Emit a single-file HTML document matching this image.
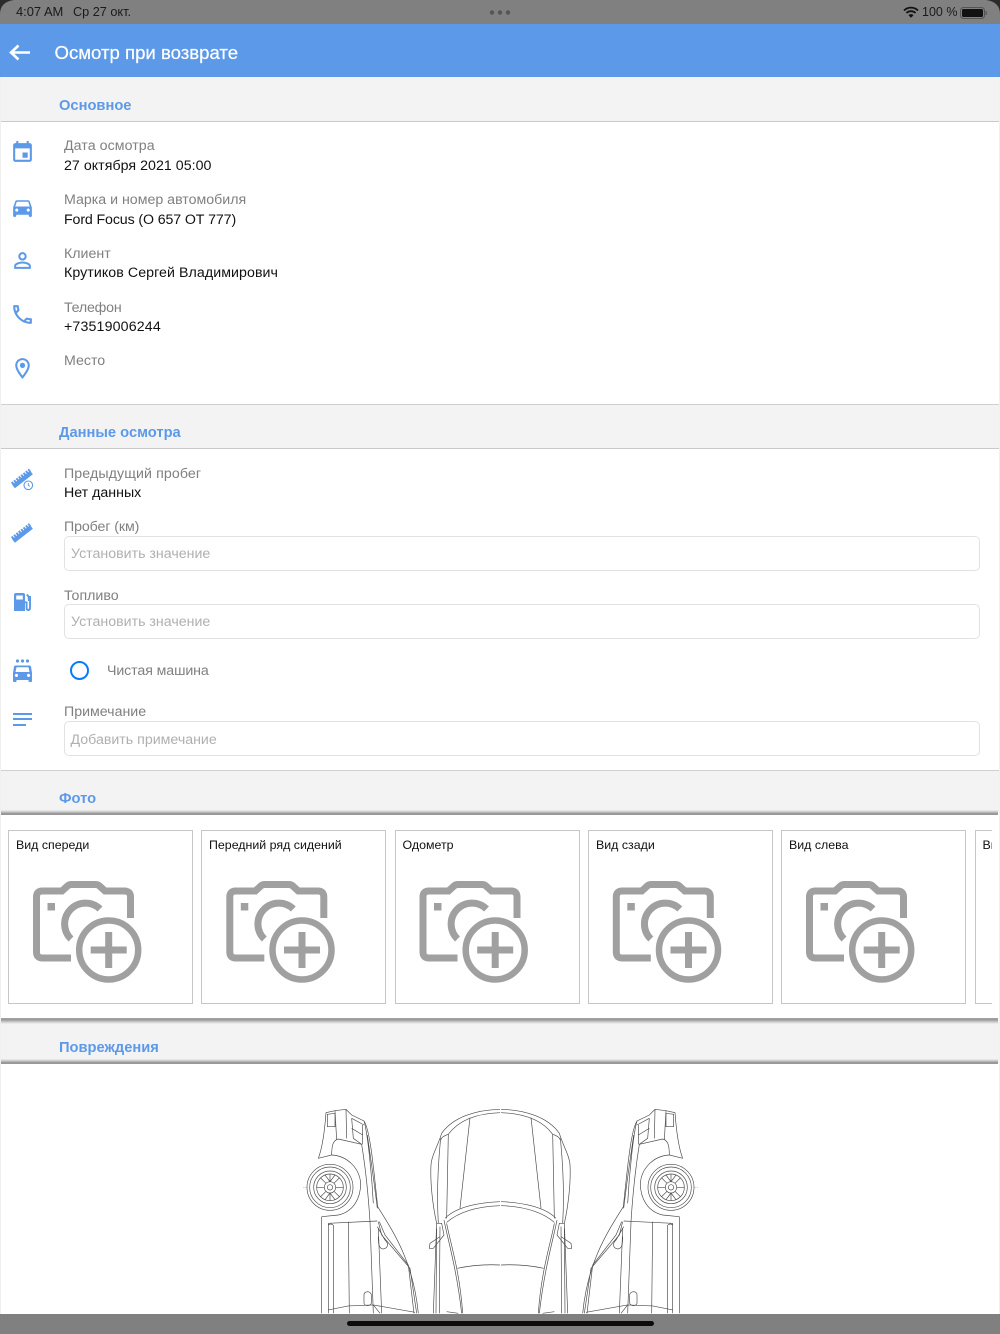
<!DOCTYPE html>
<html lang="ru">
<head>
<meta charset="utf-8">
<title>Осмотр при возврате</title>
<style>
html,body{margin:0;padding:0;background:#fff}
#p{position:relative;width:1000px;height:1334px;overflow:hidden;background:#fff;font-family:"Liberation Sans","Noto Sans CJK JP",sans-serif}
#p div,#p svg{position:absolute}
.t{white-space:nowrap;line-height:18px;font-size:14.2px}
.l{color:#808080}
.v{color:#111}
.h{left:59px;color:#5c99e8;font-size:14.7px;font-weight:bold;white-space:nowrap;line-height:18px}
.g{left:0;width:1000px;background:#f3f3f3}
.i{left:64px;width:914px;height:32px;border:1px solid #e2e2e2;border-radius:5px;background:#fff}
.ph{left:71px;color:#b0b0b0;font-size:14.2px;line-height:18px;white-space:nowrap}
.c{top:830px;width:183px;height:172px;border:1px solid #c6c6c6;background:#fff;overflow:hidden}
.c div{left:7px;top:6px;font-size:12.4px;line-height:16px;color:#111;white-space:nowrap}
.sh{left:1px;width:997px;height:5px;background:linear-gradient(#f0f0f0,#c4c4c4 40%,#8c8c8c 80%,#a4a4a4)}
</style>
</head>
<body>
<div id="p">

<div class="g" style="top:77px;height:45px"></div>
<div style="left:0;top:121px;width:1000px;height:1px;background:#c9c9c9"></div>
<div class="h" style="top:96.5px">Основное</div>

<div class="g" style="top:404px;height:45px"></div>
<div style="left:0;top:404px;width:1000px;height:1px;background:#cfcfcf"></div>
<div style="left:0;top:448px;width:1000px;height:1px;background:#c9c9c9"></div>
<div class="h" style="top:424px">Данные осмотра</div>

<div class="g" style="top:770px;height:43px"></div>
<div style="left:0;top:770px;width:1000px;height:1px;background:#cfcfcf"></div>
<div class="sh" style="top:810px"></div>
<div class="h" style="top:790px">Фото</div>

<div class="g" style="top:1020px;height:43px"></div>
<div class="sh" style="top:1018px;height:6px;background:linear-gradient(#a4a4a4,#9a9a9a 30%,#cacaca 65%,#f3f3f3)"></div>
<div class="sh" style="top:1059px"></div>
<div class="h" style="top:1039px">Повреждения</div>

<div style="left:0;top:77px;width:1px;height:1240px;background:#f0f0f0"></div>
<div style="left:999px;top:77px;width:1px;height:1240px;background:#f0f0f0"></div>

<div class="t l" style="left:64px;top:137px;letter-spacing:.06px">Дата осмотра</div>
<div class="t v" style="left:64px;top:157px;letter-spacing:.04px">27 октября 2021 05:00</div>
<div class="t l" style="left:64px;top:191px">Марка и номер автомобиля</div>
<div class="t v" style="left:64px;top:210.5px;letter-spacing:-.12px">Ford Focus (О 657 ОТ 777)</div>
<div class="t l" style="left:64px;top:245px">Клиент</div>
<div class="t v" style="left:64px;top:264px;letter-spacing:.07px">Крутиков Сергей Владимирович</div>
<div class="t l" style="left:64px;top:299px;letter-spacing:-.2px">Телефон</div>
<div class="t v" style="left:64px;top:318px;letter-spacing:.15px">+73519006244</div>
<div class="t l" style="left:64px;top:352px">Место</div>

<div class="t l" style="left:64px;top:465px;letter-spacing:.1px">Предыдущий пробег</div>
<div class="t v" style="left:64px;top:484px">Нет данных</div>
<div class="t l" style="left:64px;top:518px;letter-spacing:-.1px">Пробег (км)</div>
<div class="i" style="top:536px;height:33px"></div>
<div class="ph" style="top:545px">Установить значение</div>
<div class="t l" style="left:64px;top:586.5px">Топливо</div>
<div class="i" style="top:604px;height:33px"></div>
<div class="ph" style="top:613px">Установить значение</div>
<div style="left:70px;top:661px;width:15px;height:15px;border:2px solid #0a7bf5;border-radius:50%"></div>
<div class="t l" style="left:107px;top:662px;letter-spacing:-.1px">Чистая машина</div>
<div class="t l" style="left:64px;top:703px">Примечание</div>
<div class="i" style="top:721px;height:33px"></div>
<div class="ph" style="left:70.5px;top:730.5px">Добавить примечание</div>

<svg style="left:9.5px;top:139.5px" width="25" height="25" viewBox="0 0 24 24" fill="#5c99e8"><path d="M17 12h-5v5h5v-5zM16 1v2H8V1H6v2H5c-1.11 0-1.99.9-1.99 2L3 19c0 1.1.89 2 2 2h14c1.1 0 2-.9 2-2V5c0-1.1-.9-2-2-2h-1V1h-2zm3 18H5V8h14v11z"/></svg>
<svg style="left:10px;top:195px" width="25" height="25" viewBox="0 0 24 24" fill="#5c99e8"><path d="M18.92 6.01C18.72 5.42 18.16 5 17.5 5h-11c-.66 0-1.21.42-1.42 1.01L3 12v8c0 .55.45 1 1 1h1c.55 0 1-.45 1-1v-1h12v1c0 .55.45 1 1 1h1c.55 0 1-.45 1-1v-8l-2.08-5.99zM6.5 16c-.83 0-1.5-.67-1.5-1.5S5.67 13 6.5 13s1.5.67 1.5 1.5S7.33 16 6.5 16zm11 0c-.83 0-1.5-.67-1.5-1.5s.67-1.5 1.5-1.5 1.5.67 1.5 1.5-.67 1.5-1.5 1.5zM5 11l1.5-4.5h11L19 11H5z"/></svg>
<svg style="left:10px;top:248px" width="25" height="25" viewBox="0 0 24 24" fill="#5c99e8"><path d="M12 5.9c1.16 0 2.1.94 2.1 2.1s-.94 2.1-2.1 2.1S9.9 9.16 9.9 8s.94-2.1 2.1-2.1m0 9c2.97 0 6.1 1.46 6.1 2.1v1.1H5.9V17c0-.64 3.13-2.1 6.1-2.1M12 4C9.79 4 8 5.79 8 8s1.79 4 4 4 4-1.79 4-4-1.79-4-4-4zm0 9c-2.67 0-8 1.34-8 4v3h16v-3c0-2.66-5.33-4-8-4z"/></svg>
<svg style="left:10px;top:302px" width="25" height="25" viewBox="0 0 24 24" fill="#5c99e8"><path d="M6.54 5c.06.89.21 1.76.45 2.59l-1.2 1.2c-.41-1.2-.67-2.47-.76-3.79h1.51m9.86 12.02c.85.24 1.72.39 2.6.45v1.49c-1.32-.09-2.59-.35-3.8-.75l1.2-1.19M7.5 3H4c-.55 0-1 .45-1 1 0 9.39 7.61 17 17 17 .55 0 1-.45 1-1v-3.49c0-.55-.45-1-1-1-1.24 0-2.45-.2-3.57-.57-.1-.04-.21-.05-.31-.05-.26 0-.51.1-.71.29l-2.2 2.2c-2.83-1.45-5.15-3.76-6.59-6.59l2.2-2.2c.28-.28.36-.67.25-1.02C8.7 6.45 8.5 5.25 8.5 4c0-.55-.45-1-1-1z"/></svg>
<svg style="left:9.5px;top:355.5px" width="25" height="25" viewBox="0 0 24 24" fill="#5c99e8"><path d="M12 2C8.13 2 5 5.13 5 9c0 5.25 7 13 7 13s7-7.75 7-13c0-3.87-3.13-7-7-7zM7 9c0-2.76 2.24-5 5-5s5 2.24 5 5c0 2.88-2.88 7.19-5 9.88C9.92 16.21 7 11.85 7 9z"/><circle cx="12" cy="9" r="2.5"/></svg>

<svg style="left:0;top:460px" width="40" height="90" viewBox="0 0 40 90">
<g fill="none" stroke="#5c99e8">
<path d="M13.5 26.5L31.5 12.5" stroke-width="4.4"/>
<path d="M12 24L30 10" stroke-width="3.4" stroke-dasharray="2 1"/>
<path d="M13.5 81L31.5 67" stroke-width="4.4"/>
<path d="M12 78.500L30 64.500" stroke-width="3.4" stroke-dasharray="2 1"/>
</g>
<circle cx="28.3" cy="25.3" r="4.3" fill="#fff" stroke="#5c99e8" stroke-width="1.1"/>
<path d="M28.3 23v2.4l1.6 1" fill="none" stroke="#5c99e8" stroke-width=".9"/>
</svg>

<svg style="left:13px;top:592px" width="20" height="20" viewBox="0 0 20 20">
<path fill="#5c99e8" d="M1 3q0-2 2-2h7q2 0 2 2v16H1zM3.2 3.5v4h6.6v-4z"/>
<path fill="none" stroke="#5c99e8" stroke-width="1.9" d="M13.8 2.5l3.2 3.5v10q0 2-1.700 2t-1.700-2V10.500L12 10"/>
<path fill="#5c99e8" d="M14.5 4h3.5v5h-3z"/>
</svg>

<svg style="left:10px;top:658px" width="25" height="26" viewBox="0 0 25 26" fill="#5c99e8">
<circle cx="7.5" cy="3" r="1.6"/><circle cx="12.5" cy="3" r="1.6"/><circle cx="17.5" cy="3" r="1.6"/>
<path d="M21 8.500C20.800 8 20.200 7.500 19.500 7.500h-14c-.7 0-1.200.4-1.500 1L3 15v8c0 .6.400 1 1 1h1.500c.6 0 1-.4 1-1v-1h12v1c0 .6.400 1 1 1H21c.6 0 1-.4 1-1v-8zM6.500 19c-.9 0-1.700-.7-1.700-1.600s.8-1.600 1.700-1.600 1.600.7 1.600 1.600-.7 1.600-1.600 1.600zm12 0c-.9 0-1.600-.7-1.600-1.600s.7-1.600 1.600-1.600 1.700.7 1.700 1.600-.8 1.600-1.700 1.600zM5.500 14l1-4.800h12l1 4.800z"/>
</svg>

<div style="left:13px;top:712.5px;width:19px;height:2px;background:#5c99e8"></div>
<div style="left:13px;top:718px;width:19px;height:2px;background:#5c99e8"></div>
<div style="left:13px;top:723.5px;width:13px;height:2px;background:#5c99e8"></div>

<div style="left:0;top:815px;width:992px;height:203px;overflow:hidden">
<div class="c" style="left:8px;top:15px"><div>Вид спереди</div></div>
<div class="c" style="left:201px;top:15px"><div>Передний ряд сидений</div></div>
<div class="c" style="left:394.5px;top:15px"><div>Одометр</div></div>
<div class="c" style="left:588px;top:15px"><div>Вид сзади</div></div>
<div class="c" style="left:781px;top:15px"><div>Вид слева</div></div>
<div class="c" style="left:974.5px;top:15px"><div>Вид справа</div></div>
</div>

<svg style="left:0;top:815px" width="1000" height="204" viewBox="0 815 1000 204">
<defs>
<g id="cam">
<path d="M71 958H42.500q-6 0-6-6V897q0-6 6-6H62l5.500-5q1.500-1.500 4-1.500h24q2.500 0 4 1.500l5.500 5h19.500q6 0 6 6v21" fill="none" stroke="#a0a0a0" stroke-width="7"/>
<rect x="47.5" y="903" width="7.500" height="7.500" fill="#a0a0a0"/>
<path d="M71 939A18 18 0 1 1 100 909" fill="none" stroke="#a0a0a0" stroke-width="7"/>
<circle cx="108.7" cy="950" r="29.5" fill="#fff" stroke="#a0a0a0" stroke-width="6.5"/>
<path d="M90.700 950h36M108.700 932v36" stroke="#a0a0a0" stroke-width="7"/>
</g>
</defs>
<use href="#cam"/>
<use href="#cam" x="193.300"/>
<use href="#cam" x="386.500"/>
<use href="#cam" x="579.800"/>
<use href="#cam" x="773"/>
</svg>

<svg style="left:0;top:1095px" width="1000" height="219" viewBox="0 1095 1000 219">
<defs>
<g id="car" fill="none" stroke="#4a4a4a" stroke-width="2">
<path d="M85 190C100 150 105 95 108 53L135 47L168 43L185 60L222 78C240 105 250 210 263 335C310 410 370 500 385 655"/>
<path d="M135 47L140 135M168 43L170 130M185 70L222 90M185 100L218 120M190 130L215 148M185 70L190 130M218 90V148"/>
<path d="M222 78C232 110 245 230 250 325M232 120C245 210 255 280 262 340"/>
<path d="M112 58L135 55V95H112Z"/>
<path d="M85 190L125 180C125 150 130 135 145 132L215 148C225 210 235 300 240 380"/>
<circle cx="120" cy="277" r="69"/><circle cx="120" cy="277" r="61"/><circle cx="120" cy="277" r="49"/>
<circle cx="120" cy="277" r="40"/><circle cx="120" cy="277" r="17"/><circle cx="120" cy="277" r="8"/>
<path d="M125 180A92 92 0 0 1 212 265C212 310 190 350 145 360L95 365"/>
<path d="M120 237V260M120 294V317M80 277H103M137 277H160M92 249L108 265M148 249L132 265M92 305L108 289M148 305L132 289M105 240L120 260L135 240M105 314L120 294L135 314"/>
<path d="M40 277H50" stroke-dasharray="3 3" stroke-width="1"/>
<path d="M95 365L95 655M115 385V655M130 390V655M175 380L178 655M240 380L250 655M115 385L262 378"/>
<path d="M115 390q7 -6 14 0"/>
<path d="M262 395L285 435C300 450 290 460 280 462C265 462 265 440 265 425"/>
<path d="M265 380L275 420L360 520L380 655M268 380L285 420L355 510L372 655"/>
<path d="M265 400L275 655M222 625V600Q222 590 234 590Q245 592 245 605V620Q245 630 234 632Q224 632 222 625Z"/>
<path d="M115 645L175 633L250 630L375 652M250 630L270 655"/>
<path d="M630 43C560 45 490 65 455 115C445 150 425 180 423 210C420 270 430 340 440 385L430 655"/>
<path d="M630 53C570 55 510 70 475 118C455 125 455 130 452 135"/>
<path d="M540 68L510 340M475 118L470 370M452 130C445 200 440 300 445 385"/>
<path d="M630 320C570 322 500 335 465 370M630 332C570 334 510 348 470 382"/>
<path d="M462 375C470 420 500 520 515 655M470 385C480 440 510 530 518 655M502 520C540 512 590 508 630 510"/>
<path d="M440 385H455L462 420L430 460H418L420 445L450 425"/>
<path d="M450 395L448 655M440 400L438 655M470 650L505 655"/>
</g>
</defs>
<use href="#car" transform="translate(290 1095) scale(.3333)"/>
<use href="#car" transform="translate(711 1095) scale(-.3333 .3333)"/>
</svg>

<div style="left:0;top:0;width:1000px;height:24px;background:#808080"></div>
<svg style="left:0;top:0" width="1000" height="24" viewBox="0 0 1000 24">
<path d="M0 0H14Q0 2 0 14Z" fill="#2b2b2b"/>
<path d="M1000 0H986Q1000 2 1000 14Z" fill="#2b2b2b"/>
<circle cx="492" cy="12.5" r="2.2" fill="#555"/><circle cx="500" cy="12.5" r="2.2" fill="#555"/><circle cx="508" cy="12.5" r="2.2" fill="#555"/>
<path d="M904 10.500a10 10 0 0 1 14 0M906.500 13a6.500 6.500 0 0 1 9 0" fill="none" stroke="#111" stroke-width="1.800"/>
<path d="M908.500 15.200a3.500 3.500 0 0 1 5 0L911 17.800z" fill="#111"/>
<rect x="960.5" y="7.5" width="24" height="11" rx="3" fill="none" stroke="#555"/>
<rect x="962" y="9" width="21" height="8" rx="1.5" fill="#111"/>
<rect x="985.5" y="11" width="1.2" height="4" fill="#555"/>
</svg>
<div style="left:16px;top:4px;font-size:12.9px;line-height:16px;color:#1a1a1a;white-space:nowrap">4:07 AM</div>
<div style="left:73px;top:4px;font-size:12.7px;line-height:16px;color:#1a1a1a;white-space:nowrap">Ср 27 окт.</div>
<div style="left:922px;top:4px;font-size:12.5px;line-height:16px;color:#1a1a1a;white-space:nowrap">100 %</div>

<div style="left:0;top:24px;width:1000px;height:53px;background:#5c99e8"></div>
<svg style="left:8px;top:42px" width="24" height="22" viewBox="0 0 24 22"><path d="M22 10.500H3M10.500 3.500L3 10.500L10.500 17.500" fill="none" stroke="#fff" stroke-width="2.600"/></svg>
<div style="left:54.5px;top:43px;color:#fff;font-size:18.6px;line-height:20px;white-space:nowrap;-webkit-text-stroke:.2px #fff">Осмотр при возврате</div>

<div style="left:0;top:1314px;width:1000px;height:20px;background:#808080"></div>
<div style="left:347px;top:1321px;width:307px;height:5px;border-radius:3px;background:#0c0c0c"></div>

</div>
</body>
</html>
